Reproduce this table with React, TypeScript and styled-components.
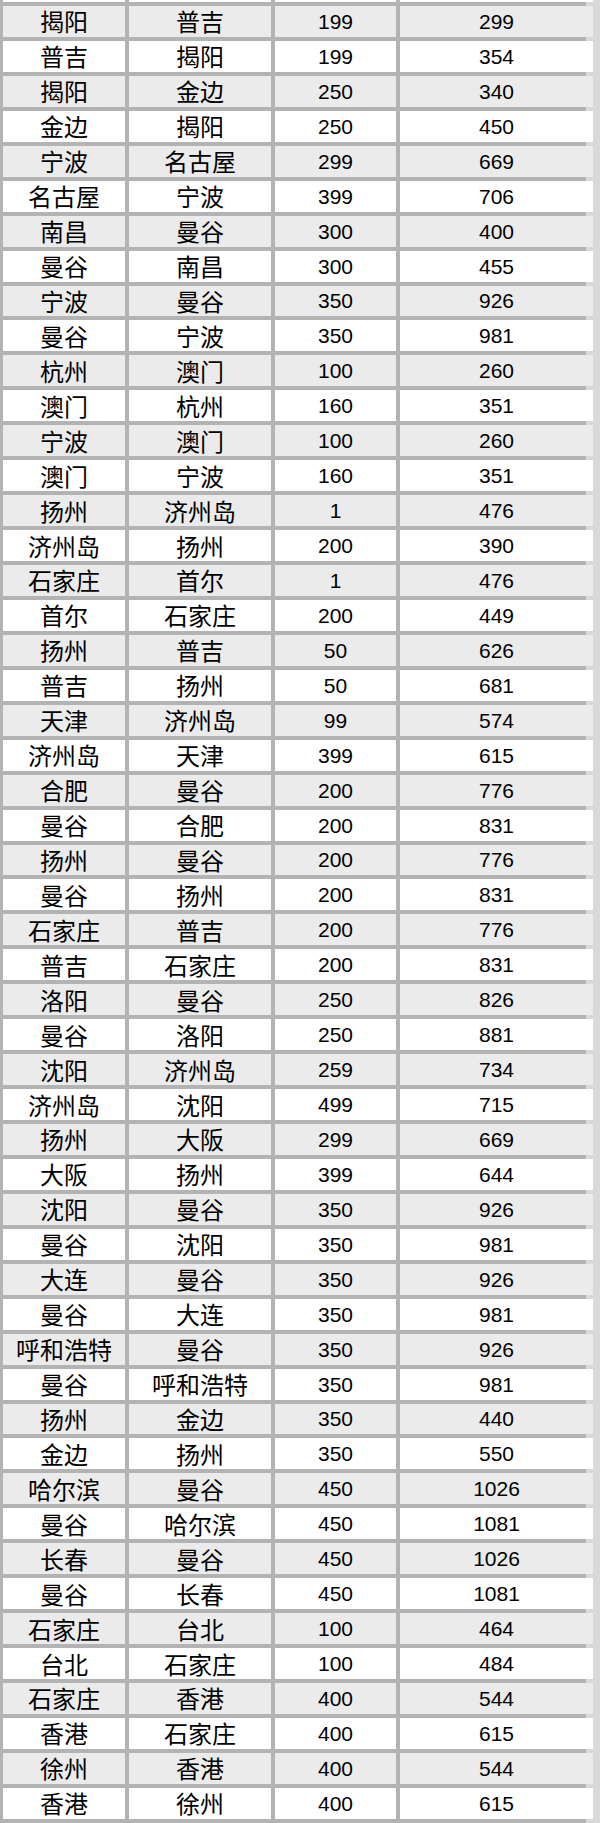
import styled, { createGlobalStyle } from "styled-components";

const GlobalStyle = createGlobalStyle`
  html, body {
    margin: 0;
    padding: 0;
    background: #d9d9d9;
  }
`;

type Route = [string, string, number, number];

const routes: Route[] = [
  ["揭阳", "普吉", 199, 299],
  ["普吉", "揭阳", 199, 354],
  ["揭阳", "金边", 250, 340],
  ["金边", "揭阳", 250, 450],
  ["宁波", "名古屋", 299, 669],
  ["名古屋", "宁波", 399, 706],
  ["南昌", "曼谷", 300, 400],
  ["曼谷", "南昌", 300, 455],
  ["宁波", "曼谷", 350, 926],
  ["曼谷", "宁波", 350, 981],
  ["杭州", "澳门", 100, 260],
  ["澳门", "杭州", 160, 351],
  ["宁波", "澳门", 100, 260],
  ["澳门", "宁波", 160, 351],
  ["扬州", "济州岛", 1, 476],
  ["济州岛", "扬州", 200, 390],
  ["石家庄", "首尔", 1, 476],
  ["首尔", "石家庄", 200, 449],
  ["扬州", "普吉", 50, 626],
  ["普吉", "扬州", 50, 681],
  ["天津", "济州岛", 99, 574],
  ["济州岛", "天津", 399, 615],
  ["合肥", "曼谷", 200, 776],
  ["曼谷", "合肥", 200, 831],
  ["扬州", "曼谷", 200, 776],
  ["曼谷", "扬州", 200, 831],
  ["石家庄", "普吉", 200, 776],
  ["普吉", "石家庄", 200, 831],
  ["洛阳", "曼谷", 250, 826],
  ["曼谷", "洛阳", 250, 881],
  ["沈阳", "济州岛", 259, 734],
  ["济州岛", "沈阳", 499, 715],
  ["扬州", "大阪", 299, 669],
  ["大阪", "扬州", 399, 644],
  ["沈阳", "曼谷", 350, 926],
  ["曼谷", "沈阳", 350, 981],
  ["大连", "曼谷", 350, 926],
  ["曼谷", "大连", 350, 981],
  ["呼和浩特", "曼谷", 350, 926],
  ["曼谷", "呼和浩特", 350, 981],
  ["扬州", "金边", 350, 440],
  ["金边", "扬州", 350, 550],
  ["哈尔滨", "曼谷", 450, 1026],
  ["曼谷", "哈尔滨", 450, 1081],
  ["长春", "曼谷", 450, 1026],
  ["曼谷", "长春", 450, 1081],
  ["石家庄", "台北", 100, 464],
  ["台北", "石家庄", 100, 484],
  ["石家庄", "香港", 400, 544],
  ["香港", "石家庄", 400, 615],
  ["徐州", "香港", 400, 544],
  ["香港", "徐州", 400, 615],
];

function App() {
  return (
    <>
      <GlobalStyle />
      <Table>
        {/* bottom edge of the row scrolled out above */}
        <Row>
          {[0, 1, 2, 3].map((i) => (
            <Cell key={i} $shade={false} $cjk={false} />
          ))}
        </Row>
        {routes.map(([from, to, price, total], i) => {
          const shade = i % 2 === 0;
          return (
            <Row key={i}>
              <Cell $shade={shade} $cjk>
                {from}
              </Cell>
              <Cell $shade={shade} $cjk>
                {to}
              </Cell>
              <Cell $shade={shade} $cjk={false}>
                {price}
              </Cell>
              <Cell $shade={shade} $cjk={false}>
                {total}
              </Cell>
            </Row>
          );
        })}
      </Table>
    </>
  );
}

const Table = styled.div`
  display: grid;
  grid-template-columns: 122px 142px 121px 193px;
  grid-template-rows: 2px;
  grid-auto-rows: 30.94px;
  column-gap: 4px;
  row-gap: 4px;
  width: 578px;
  padding: 0 5px 4px 3px;
  background: #b3b3b3;
  box-sizing: content-box;
`;

const Row = styled.div`
  display: grid;
  grid-column: 1 / -1;
  grid-template-columns: subgrid;
`;

const Cell = styled.div<{ $shade: boolean; $cjk: boolean }>`
  display: flex;
  align-items: center;
  justify-content: center;
  min-height: 0;
  background: ${(p) => (p.$shade ? "#ebebeb" : "#ffffff")};
  color: #000;
  font-family: ${(p) =>
    p.$cjk
      ? `"Noto Sans CJK SC", sans-serif`
      : `"Liberation Sans", Arial, sans-serif`};
  font-size: ${(p) => (p.$cjk ? "24px" : "21px")};
  line-height: 1;
  white-space: nowrap;
`;

export default App;
